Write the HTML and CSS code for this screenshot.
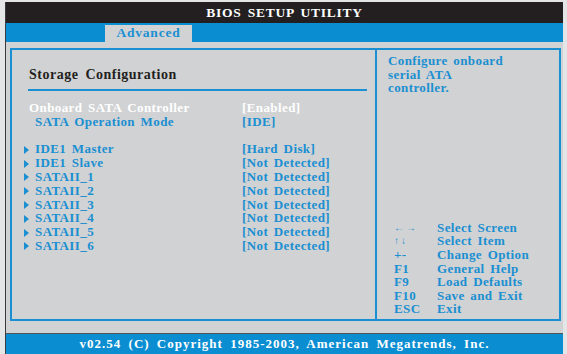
FILE: index.html
```html
<!DOCTYPE html>
<html>
<head>
    <title>BIOS Setup Utility</title>
    <link rel="stylesheet" href="styles.css">
</head>
<body>
    <div class="screen">
        <div class="title">BIOS SETUP UTILITY</div>
        <div class="tabs">
            <div class="tab">Advanced</div>
        </div>
        <div class="main">
            <div class="frame">
                <div class="left">
                    <h1 class="heading">Storage Configuration</h1>
                    <div class="rule"></div>
                    <div class="row selected">
                        <span class="label">Onboard SATA Controller</span>
                        <span class="value">[Enabled]</span>
                    </div>
                    <div class="row">
                        <span class="label sub">SATA Operation Mode</span>
                        <span class="value">[IDE]</span>
                    </div>
                    <div class="row"></div>
                    <div class="row">
                        <span class="label sub"><i class="arrow"></i>IDE1 Master</span>
                        <span class="value">[Hard Disk]</span>
                    </div>
                    <div class="row">
                        <span class="label sub"><i class="arrow"></i>IDE1 Slave</span>
                        <span class="value">[Not Detected]</span>
                    </div>
                    <div class="row">
                        <span class="label sub"><i class="arrow"></i>SATAII_1</span>
                        <span class="value">[Not Detected]</span>
                    </div>
                    <div class="row">
                        <span class="label sub"><i class="arrow"></i>SATAII_2</span>
                        <span class="value">[Not Detected]</span>
                    </div>
                    <div class="row">
                        <span class="label sub"><i class="arrow"></i>SATAII_3</span>
                        <span class="value">[Not Detected]</span>
                    </div>
                    <div class="row">
                        <span class="label sub"><i class="arrow"></i>SATAII_4</span>
                        <span class="value">[Not Detected]</span>
                    </div>
                    <div class="row">
                        <span class="label sub"><i class="arrow"></i>SATAII_5</span>
                        <span class="value">[Not Detected]</span>
                    </div>
                    <div class="row">
                        <span class="label sub"><i class="arrow"></i>SATAII_6</span>
                        <span class="value">[Not Detected]</span>
                    </div>
                </div>
                <div class="right">
                    <p class="help">Configure onboard<br>serial ATA<br>controller.</p>
                    <div class="keys">
                        <span class="key small">&larr;&rarr;</span><span>Select Screen</span>
                        <span class="key small">&uarr;&darr;</span><span>Select Item</span>
                        <span class="key">+-</span><span>Change Option</span>
                        <span class="key">F1</span><span>General Help</span>
                        <span class="key">F9</span><span>Load Defaults</span>
                        <span class="key">F10</span><span>Save and Exit</span>
                        <span class="key">ESC</span><span>Exit</span>
                    </div>
                </div>
            </div>
        </div>
        <div class="footer">v02.54 (C) Copyright 1985-2003, American Megatrends, Inc.</div>
    </div>
</body>
</html>
```

FILE: styles.css
```css
body {
    margin: 0;
    width: 567px;
    height: 354px;
    overflow: hidden;
    background: #e4e5e7;
    font-family: "Liberation Serif", "Times New Roman", serif;
    font-weight: bold;
    font-size: 13px;
    letter-spacing: 0.4px;
    word-spacing: 2px;
}
.screen {
    margin: 2px 4px 0 5px;
    height: 352px;
    border-left: 1px solid #3b3b3d;
    display: flex;
    flex-direction: column;
}
.title {
    height: 21px;
    line-height: 22px;
    background: #231f20;
    color: #fff;
    text-align: center;
    font-size: 13.5px;
    letter-spacing: 0.75px;
}
.tabs {
    height: 19px;
    background: #0b8dd1;
    display: flex;
    align-items: flex-end;
    padding-left: 99px;
}
.tab {
    width: 87px;
    height: 17px;
    line-height: 16px;
    background: #d1d2d4;
    color: #1a8fd1;
    text-align: center;
    font-size: 13.5px;
    letter-spacing: 0.8px;
}
.main {
    flex: 1;
    background: #d1d2d4;
    padding: 6px 2px 12px 4px;
    border-bottom: 1px solid #555;
}
.frame {
    height: 100%;
    box-sizing: border-box;
    border: 2px solid #1a8fd1;
    display: grid;
    grid-template-columns: 365px 1fr;
}
.left {
    border-right: 2px solid #1a8fd1;
    padding: 17px 8px 0 16px;
}
.heading {
    margin: 0 0 0 1px;
    font-size: 14px;
    line-height: 16px;
    color: #231f20;
    letter-spacing: 0.5px;
    word-spacing: 3px;
}
.rule {
    height: 2px;
    margin: 6px 0 10px;
    background: #1a8fd1;
}
.row {
    display: flex;
    height: 13.8px;
    line-height: 14px;
    color: #1a8fd1;
}
.row.selected {
    color: #fff;
}
.label {
    width: 213px;
    padding-left: 1px;
}
.label.sub {
    padding-left: 7px;
    width: 207px;
    position: relative;
}
.arrow {
    position: absolute;
    left: -4px;
    top: 3.5px;
    border-left: 5px solid #1a8fd1;
    border-top: 4px solid transparent;
    border-bottom: 4px solid transparent;
}
.right {
    display: flex;
    flex-direction: column;
    padding: 4px 0 3px 11px;
    color: #1a8fd1;
}
.help {
    margin: 0;
    line-height: 13.7px;
}
.keys {
    margin-top: auto;
    display: grid;
    grid-template-columns: 43px 1fr;
    grid-auto-rows: 13.6px;
    line-height: 14px;
    padding-left: 6px;
}
.key.small {
    font-size: 10px;
    letter-spacing: 2px;
}
.footer {
    height: 20px;
    line-height: 20px;
    background: #0b8dd1;
    color: #fff;
    text-align: center;
    letter-spacing: 1px;
    word-spacing: 3px;
}
```
